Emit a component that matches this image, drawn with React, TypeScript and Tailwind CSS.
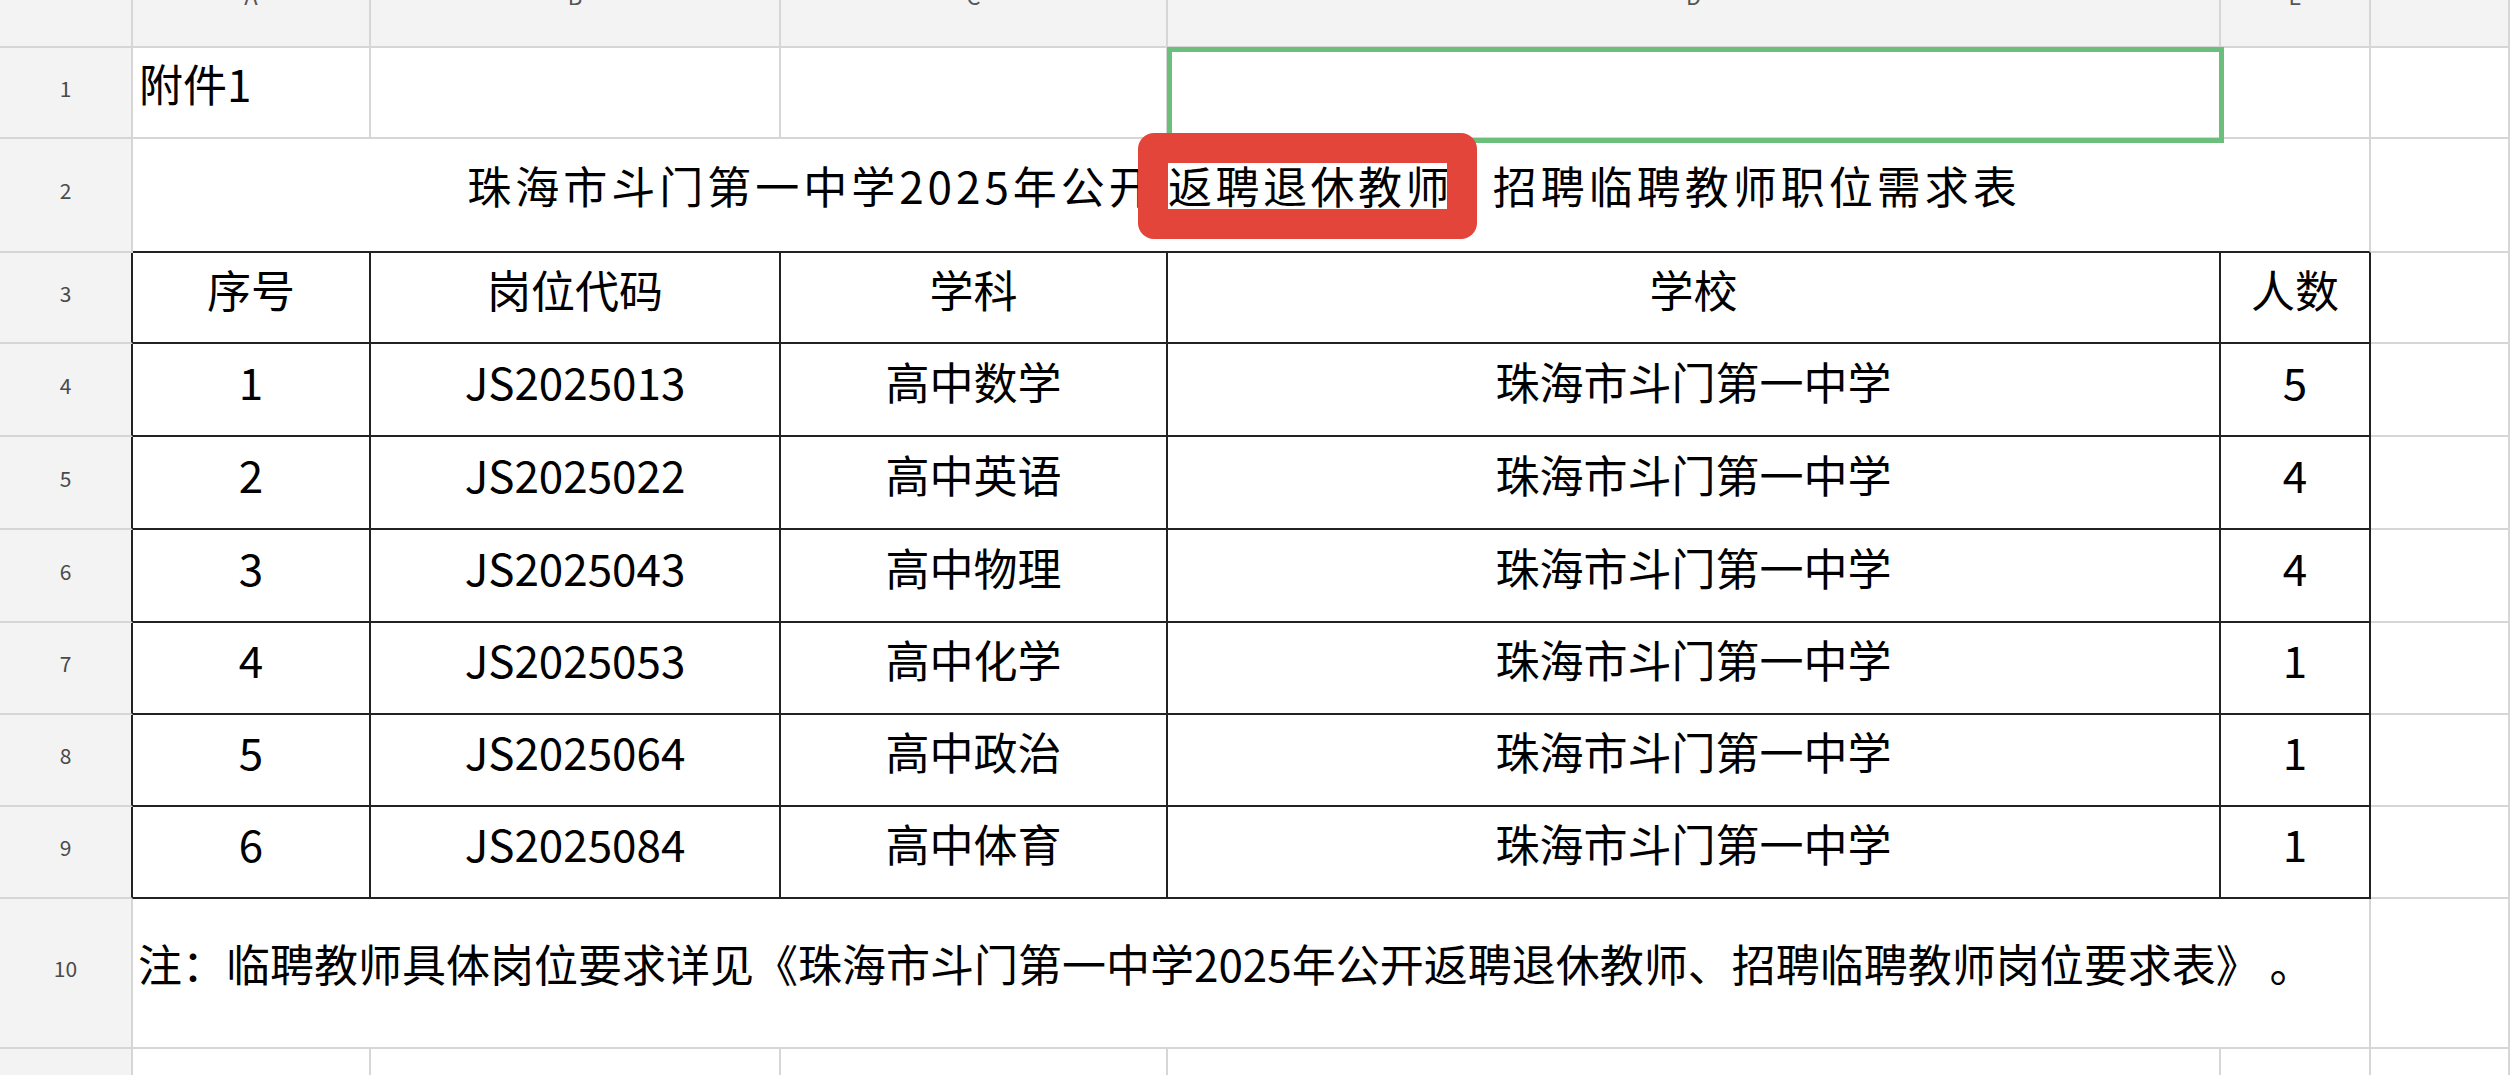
import React from "react";

const FONT = "font-['Noto_Sans_CJK_SC','Noto_Sans',sans-serif]";

const rows = [
  { n: "1", code: "JS2025013", subj: "高中数学", num: "5" },
  { n: "2", code: "JS2025022", subj: "高中英语", num: "4" },
  { n: "3", code: "JS2025043", subj: "高中物理", num: "4" },
  { n: "4", code: "JS2025053", subj: "高中化学", num: "1" },
  { n: "5", code: "JS2025064", subj: "高中政治", num: "1" },
  { n: "6", code: "JS2025084", subj: "高中体育", num: "1" },
];

function RowHead({ n, dark }: { n: string; dark?: boolean }) {
  return (
    <div
      className={
        dark
          ? "flex items-center justify-center pb-[8px] bg-[#f3f3f3] border-r-2 border-b-2 border-[#d6d6d6] border-r-[#222222] text-[21px] text-[#4a4a4a]"
          : "flex items-center justify-center pb-[8px] bg-[#f3f3f3] border-r-2 border-b-2 border-[#d6d6d6] text-[21px] text-[#4a4a4a]"
      }
    >
      {n}
    </div>
  );
}

function Gray({ children }: { children?: React.ReactNode }) {
  return <div className="border-r-2 border-b-2 border-[#d6d6d6]">{children}</div>;
}

function TCell({ children }: { children?: React.ReactNode }) {
  return (
    <div className="flex items-center justify-center pb-[18px] border-r-2 border-b-2 border-[#222222] text-[44px] text-black whitespace-nowrap">
      {children}
    </div>
  );
}

function ColHead({ l }: { l?: string }) {
  return (
    <div className="flex justify-center overflow-hidden bg-[#f3f3f3] border-r-2 border-b-2 border-[#d6d6d6]">
      {l ? <span className="-mt-[16px] text-[22px] leading-[22px] text-[#555555]">{l}</span> : null}
    </div>
  );
}

export default function App() {
  return (
    <div className={`relative w-[2510px] h-[1075px] overflow-hidden bg-white ${FONT}`}>
      <div className="grid grid-cols-[133px_238px_410px_387px_1053px_150px_139px] grid-rows-[48px_91px_114px_91px_93px_93px_93px_92px_92px_92px_150px_40px]">
        {/* header row */}
        <ColHead />
        <ColHead l="A" />
        <ColHead l="B" />
        <ColHead l="C" />
        <ColHead l="D" />
        <ColHead l="E" />
        <ColHead />

        {/* row 1 */}
        <RowHead n="1" />
        <div className="flex items-center pl-[6px] pb-[20px] border-r-2 border-b-2 border-[#d6d6d6] text-[44px] text-black whitespace-nowrap">
          附件1
        </div>
        <Gray />
        <Gray />
        <Gray />
        <Gray />
        <Gray />

        {/* row 2 */}
        <RowHead n="2" />
        <div className="col-span-5 flex items-center justify-center pb-[20px] pr-[14px] border-r-2 border-b-2 border-[#d6d6d6] border-b-[#222222] text-[44px] tracking-[4px] text-black whitespace-nowrap">
          珠海市斗门第一中学2025年公开返聘退休教师、招聘临聘教师职位需求表
        </div>
        <Gray />

        {/* row 3 */}
        <RowHead n="3" dark />
        <TCell>序号</TCell>
        <TCell>岗位代码</TCell>
        <TCell>学科</TCell>
        <TCell>学校</TCell>
        <TCell>人数</TCell>
        <Gray />

        {rows.map((r, i) => (
          <React.Fragment key={r.code}>
            <RowHead n={String(i + 4)} dark />
            <TCell>{r.n}</TCell>
            <TCell>{r.code}</TCell>
            <TCell>{r.subj}</TCell>
            <TCell>珠海市斗门第一中学</TCell>
            <TCell>{r.num}</TCell>
            <Gray />
          </React.Fragment>
        ))}

        {/* row 10 */}
        <RowHead n="10" />
        <div className="col-span-5 flex items-center pl-[5px] pb-[20px] border-r-2 border-b-2 border-[#d6d6d6] text-[44px] text-black whitespace-nowrap">
          注：临聘教师具体岗位要求详见《珠海市斗门第一中学2025年公开返聘退休教师、招聘临聘教师岗位要求表》 。
        </div>
        <Gray />

        {/* row 11 */}
        <RowHead n="" />
        <Gray />
        <Gray />
        <Gray />
        <Gray />
        <Gray />
        <Gray />
      </div>

      {/* selection box on D1 */}
      <div className="absolute left-[1167px] top-[47px] w-[1057px] h-[96px] border-[5px] border-[#6cbf7b]" />

      {/* red highlight badge */}
      <div className="absolute left-[1138px] top-[133px] w-[339px] h-[106px] rounded-[16px] bg-[#e4453b]">
        <div className="ml-[30px] mt-[30px] w-[279px] h-[46px] bg-white flex items-center overflow-hidden">
          <span className="text-[44px] leading-[46px] tracking-[3.5px] text-black whitespace-nowrap -mt-[2px]">
            返聘退休教师
          </span>
        </div>
      </div>
    </div>
  );
}
